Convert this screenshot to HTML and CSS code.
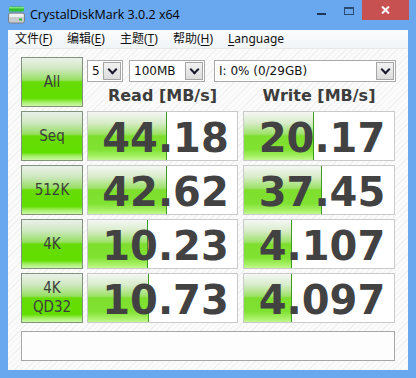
FILE: index.html
```html
<!DOCTYPE html>
<html>
<head>
<meta charset="utf-8">
<link rel="stylesheet" href="styles.css">
</head>
<body>
<div class="titlebar">
  <svg class="appicon" width="17" height="18" viewBox="0 0 17 18">
    <rect x="1" y="0.5" width="15" height="5" rx="1.5" fill="#2fbf2f"/>
    <rect x="1" y="1" width="15" height="1.5" fill="#7fe07f"/>
    <rect x="0.5" y="7" width="16" height="10" rx="2" fill="#c8ccd0" stroke="#7a8088"/>
    <rect x="1.5" y="8" width="14" height="3" fill="#eef0f2"/>
    <rect x="11" y="12.5" width="3" height="2" fill="#2fbf2f"/>
  </svg>
  <span class="title">CrystalDiskMark 3.0.2 x64</span>
  <div class="controls">
    <div class="ctl"><span class="min-ico"></span></div>
    <div class="ctl"><span class="max-ico"></span></div>
    <div class="ctl close">
      <svg width="9" height="8" viewBox="0 0 9 8"><path d="M1 0.5 L8 7.5 M8 0.5 L1 7.5" stroke="#fff" stroke-width="2"/></svg>
    </div>
  </div>
</div>
<div class="frame">
  <div class="menubar">
    <span class="mi m1">文件(<u>F</u>)</span>
    <span class="mi m2">编辑(<u>E</u>)</span>
    <span class="mi m3">主题(<u>T</u>)</span>
    <span class="mi m4">帮助(<u>H</u>)</span>
    <span class="mi m5"><u>L</u>anguage</span>
  </div>
  <div class="client">
    <div class="row">
      <div class="btn">All</div>
      <div class="topright">
        <div class="combos">
          <div class="combo c1"><span class="ctext">5</span><span class="drop"></span></div>
          <div class="combo c2"><span class="ctext">100MB</span><span class="drop"></span></div>
          <div class="combo c3"><span class="ctext">I: 0% (0/29GB)</span><span class="drop"></span></div>
        </div>
        <div class="headers">
          <div class="hdr read">Read [MB/s]</div>
          <div class="hdr write">Write [MB/s]</div>
        </div>
      </div>
    </div>
    <div class="row">
      <div class="btn">Seq</div>
      <div class="cell read"><div class="bar" style="width:79px"></div><span class="val">44.18</span></div>
      <div class="cell write"><div class="bar" style="width:70px"></div><span class="val">20.17</span></div>
    </div>
    <div class="row">
      <div class="btn">512K</div>
      <div class="cell read"><div class="bar" style="width:79px"></div><span class="val">42.62</span></div>
      <div class="cell write"><div class="bar" style="width:78px"></div><span class="val">37.45</span></div>
    </div>
    <div class="row">
      <div class="btn">4K</div>
      <div class="cell read"><div class="bar" style="width:60px"></div><span class="val">10.23</span></div>
      <div class="cell write"><div class="bar" style="width:48px"></div><span class="val">4.107</span></div>
    </div>
    <div class="row">
      <div class="btn two">4K<br>QD32</div>
      <div class="cell read"><div class="bar" style="width:61px"></div><span class="val">10.73</span></div>
      <div class="cell write"><div class="bar" style="width:48px"></div><span class="val">4.097</span></div>
    </div>
    <div class="comment"></div>
  </div>
</div>
</body>
</html>
```
FILE: styles.css
```css
* { box-sizing: border-box; }
html, body { margin: 0; padding: 0; }
body {
  width: 416px;
  height: 378px;
  background: #69a7ef;
  overflow: hidden;
  font-family: "DejaVu Sans", sans-serif;
}
.titlebar {
  height: 30px;
  display: flex;
  align-items: flex-start;
  padding-left: 8px;
}
.appicon { margin-top: 6px; flex: none; }
.title {
  margin-left: 5px;
  margin-top: 7px;
  font-family: "Open Sans", "Noto Sans", sans-serif;
  font-size: 12.5px;
  line-height: 16px;
  color: #000;
}
.controls {
  margin-left: auto;
  margin-right: 7px;
  display: flex;
  height: 20px;
}
.ctl {
  width: 26px;
  height: 20px;
  display: flex;
  align-items: center;
  justify-content: center;
}
.min-ico {
  width: 9px;
  height: 2px;
  background: #1d3656;
  margin-top: 7px;
}
.max-ico {
  width: 10px;
  height: 8px;
  border: 1px solid #2b4a70;
  border-top-width: 2px;
  margin-top: 2px;
  margin-left: 3px;
}
.ctl.close {
  width: 47px;
  background: #c75050;
  margin-left: 2px;
}
.frame {
  margin: 0 8px;
  height: 340px;
  background: #fff;
  display: flex;
  flex-direction: column;
}
.menubar {
  height: 19px;
  background: linear-gradient(#fbfcfd, #f2f5f8);
  border-bottom: 1px solid #e6e9ec;
  display: flex;
  align-items: center;
  padding-left: 7px;
  font-family: "Noto Sans", "Noto Sans CJK SC", sans-serif;
  font-size: 12px;
  color: #111;
}
.mi { line-height: 16px; white-space: nowrap; }
.m1 { width: 52px; }
.m2 { width: 53px; }
.m3 { width: 53px; }
.m4 { width: 55px; }
.mi u { text-decoration: underline; text-underline-offset: 2px; }
.client {
  flex: 1;
  padding: 8px 13px 0 13px;
  background: repeating-linear-gradient(135deg, #fbfbfb 0 3px, #f1f1f1 3px 4px);
  display: flex;
  flex-direction: column;
  gap: 4px;
}
.row {
  display: flex;
  height: 50px;
}
.btn {
  width: 62px;
  height: 50px;
  flex: none;
  border: 1px solid #7f947b;
  background: linear-gradient(to bottom, #eaf0ea 0%, #cfe8c2 22%, #97df63 46%, #66dc06 50%, #62de00 84%, #a4ef68 92%, #cdf8a8 100%);
  display: flex;
  align-items: center;
  justify-content: center;
  text-align: center;
  font-family: "DejaVu Sans Condensed", "DejaVu Sans", sans-serif;
  font-size: 15px;
  line-height: 17px;
  color: #3c3c3c;
}
.btn.two { line-height: 19px; }
.topright {
  margin-left: 4px;
  flex: 1;
  display: flex;
  flex-direction: column;
  padding-top: 3px;
}
.combos { display: flex; height: 22px; }
.combo {
  height: 22px;
  border: 1px solid #a9a9a9;
  background: #fff;
  display: flex;
  align-items: center;
  padding: 1px;
  font-size: 12px;
  color: #111;
}
.ctext { flex: 1; padding-left: 3px; white-space: nowrap; }
.combo.c1 { width: 36px; }
.combo.c2 { width: 76px; margin-left: 6px; }
.combo.c3 { width: 182px; margin-left: 9px; }
.drop {
  width: 18px;
  height: 18px;
  border: 1px solid #a5a5a5;
  background: linear-gradient(#f2f2f2, #dcdcdc) ;
  position: relative;
  flex: none;
}
.drop::after {
  content: "";
  position: absolute;
  left: 5px;
  top: 3px;
  width: 5px;
  height: 5px;
  border-right: 2px solid #1a1a2e;
  border-bottom: 2px solid #1a1a2e;
  transform: rotate(45deg);
}
.headers {
  display: flex;
  flex: 1;
  align-items: center;
  padding-top: 1px;
}
.hdr {
  font-weight: bold;
  font-size: 16px;
  color: #3d3d3d;
  text-align: center;
}
.hdr.read { width: 151px; }
.hdr.write { width: 152px; margin-left: 5px; }
.cell {
  position: relative;
  height: 50px;
  border: 1px solid #cacaca;
  background: #fff;
  display: flex;
  align-items: center;
  justify-content: center;
  overflow: hidden;
}
.cell.read { width: 151px; margin-left: 4px; }
.cell.write { width: 152px; margin-left: 5px; }
.bar {
  position: absolute;
  left: 0;
  top: 0;
  bottom: 0;
  border-right: 1px solid #3f9a22;
  background: linear-gradient(to bottom, #f5f7f5 0%, #d9eccb 22%, #9de268 46%, #7ede2e 50%, #80e232 78%, #a6f064 92%, #c2f890 100%);
}
.val {
  position: relative;
  font-weight: bold;
  font-size: 40px;
  line-height: 40px;
  color: #424242;
  padding-left: 6px;
  margin-top: 4px;
}
.comment {
  margin-top: 4px;
  width: 374px;
  height: 30px;
  border: 1px solid #a6a6a6;
  background: #fdfdfd;
}
```
